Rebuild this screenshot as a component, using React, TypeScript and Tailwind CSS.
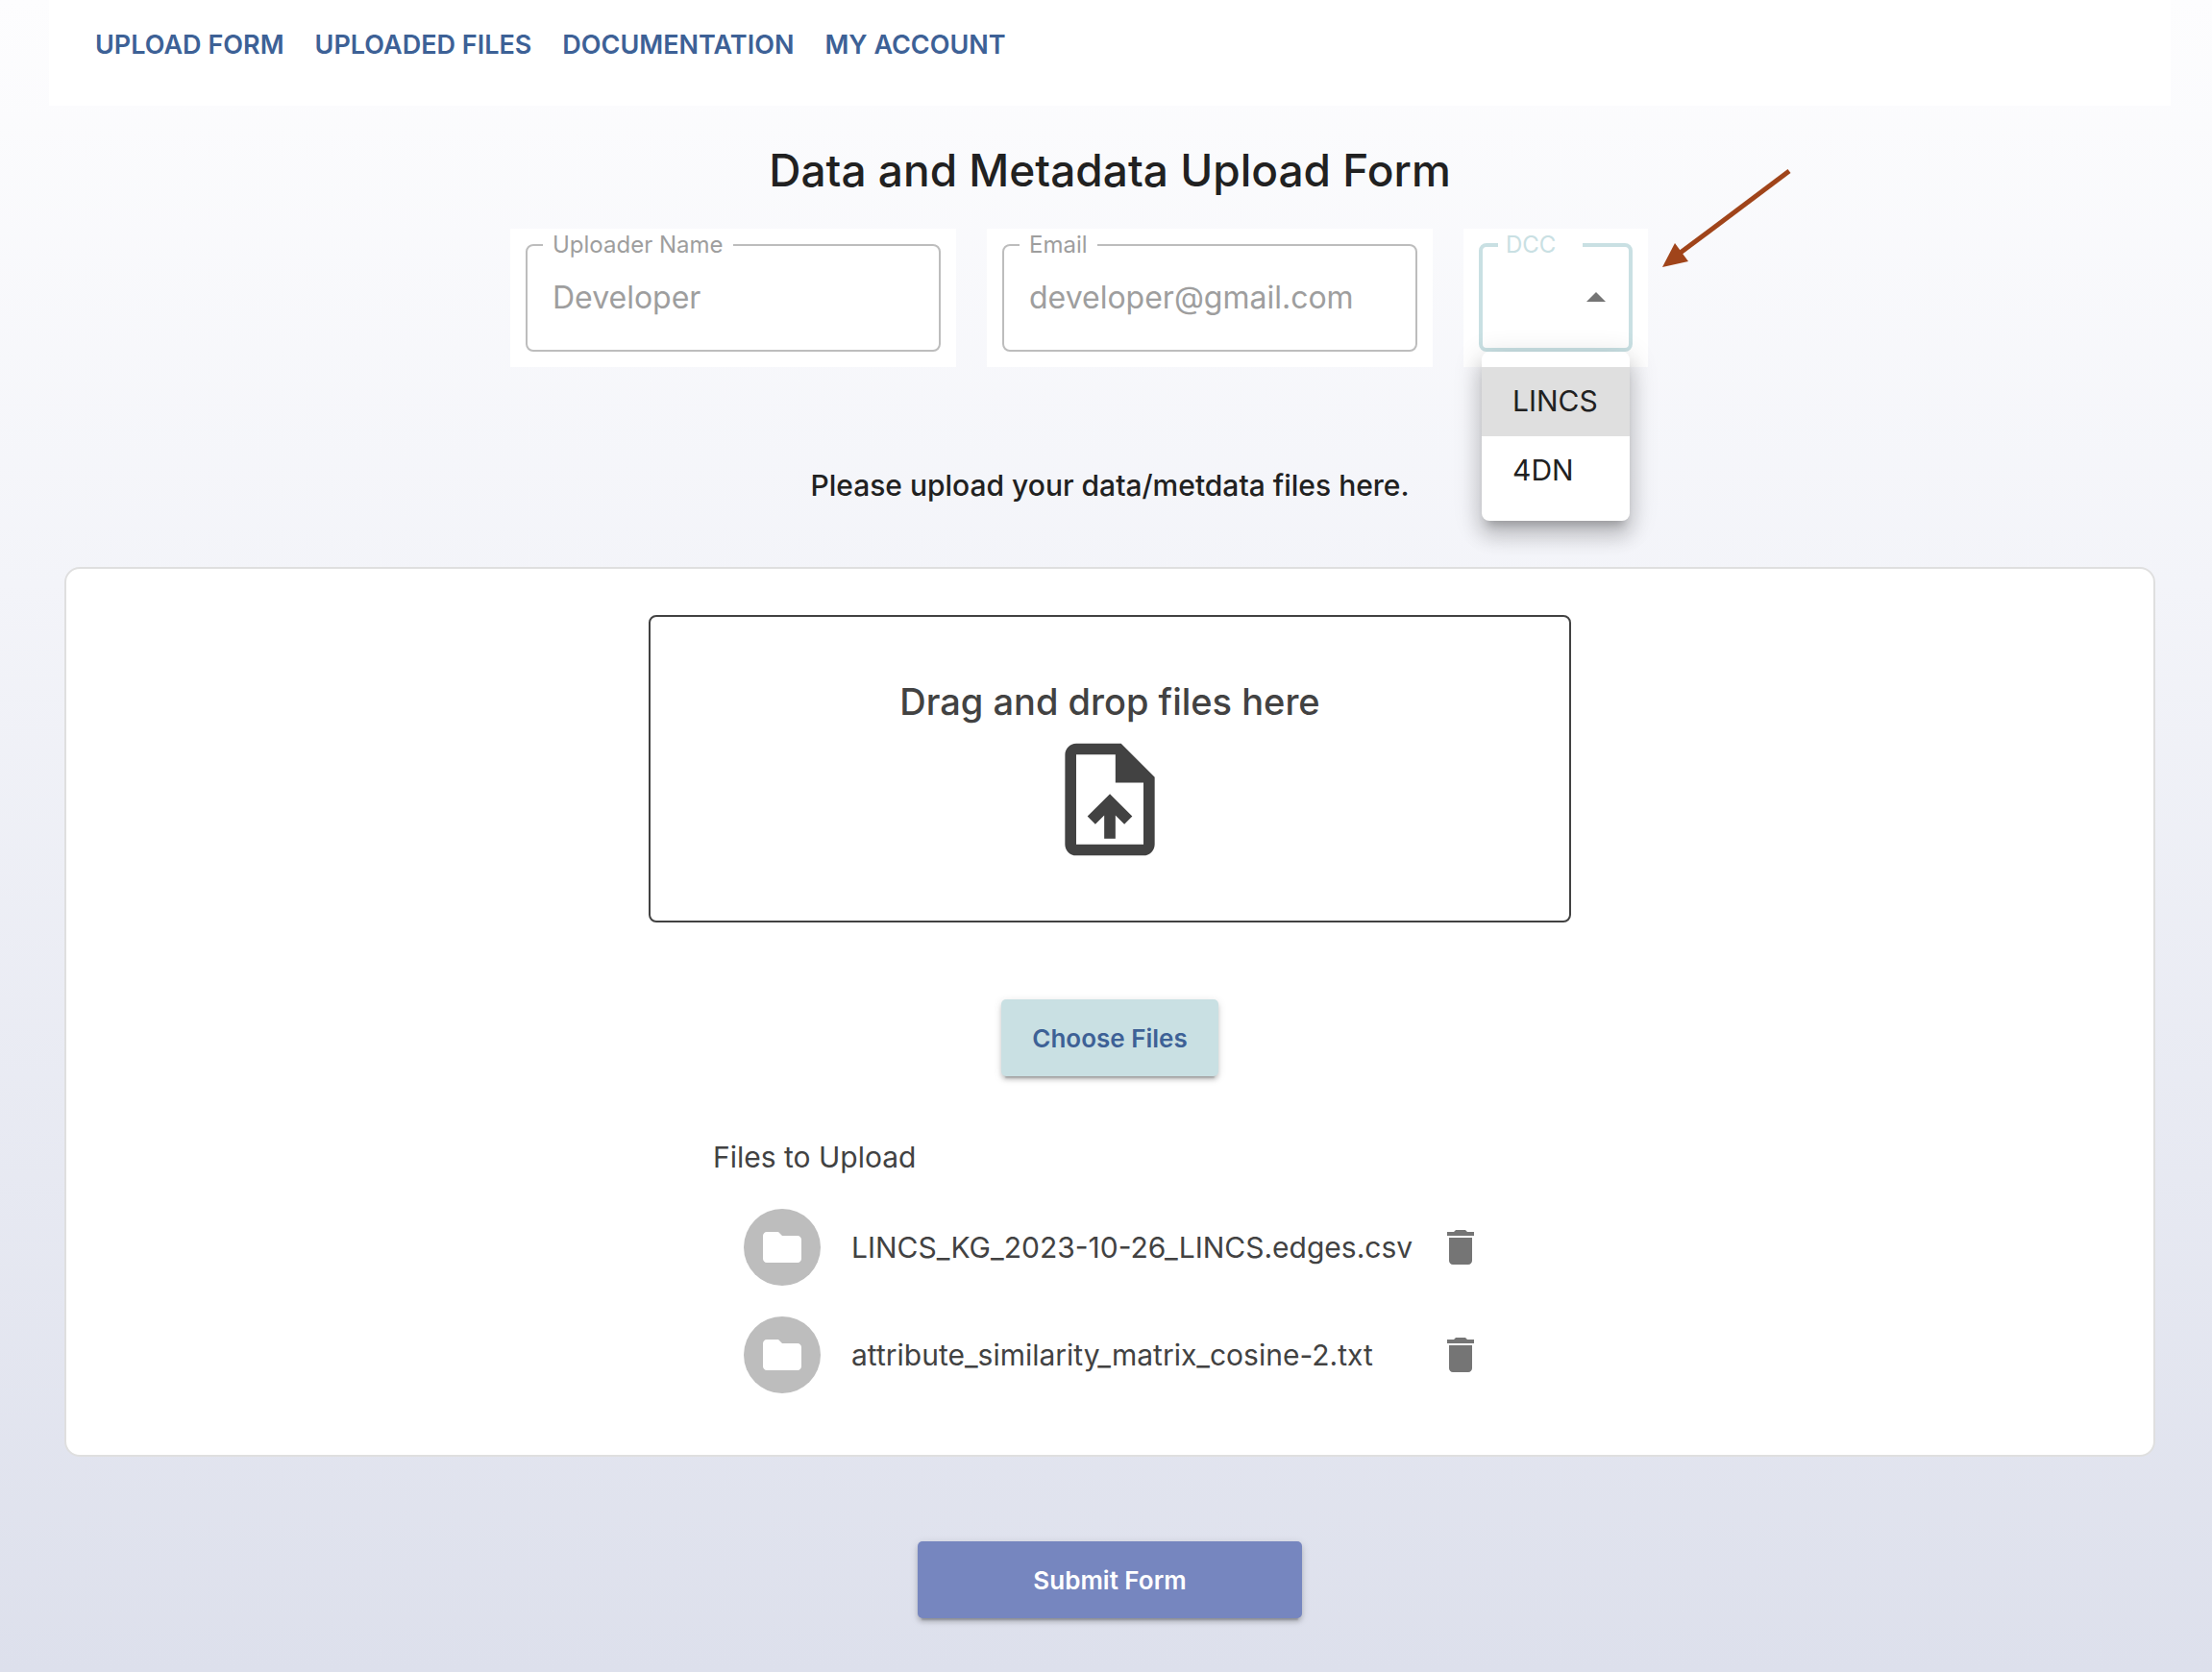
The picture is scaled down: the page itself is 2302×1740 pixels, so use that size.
import { useState } from "react";

const NAV = ["Upload Form", "Uploaded Files", "Documentation", "My Account"];
const FILES = ["LINCS_KG_2023-10-26_LINCS.edges.csv", "attribute_similarity_matrix_cosine-2.txt"];
const DCCS = ["LINCS", "4DN"];

function TextField({ id, label, value, type }: { id: string; label: string; value: string; type: string }) {
  return (
    <div className="w-[464px] bg-white px-4 pt-1 pb-4">
      <fieldset className="rounded-lg border-2 border-[#bdbdbd] px-[18px] pb-3">
        <legend className="ml-[-2px] px-[10px] text-[24px] leading-[25px] text-[#9e9e9e]">
          <label htmlFor={id}>{label}</label>
        </legend>
        <input
          id={id}
          type={type}
          defaultValue={value}
          className="block h-[85px] w-full bg-transparent px-2 text-[32px] text-[#9e9e9e] outline-none"
        />
      </fieldset>
    </div>
  );
}

function DccSelect() {
  const [dcc, setDcc] = useState("");
  return (
    <div className="relative w-48 bg-white px-4 pt-1 pb-4">
      <fieldset className="relative rounded-lg border-4 border-[#c9e0e3] px-4 pb-3">
        <legend className="w-[88px] px-2 text-[24px] leading-[25px] text-[#c9e0e3]">
          <label htmlFor="dcc">DCC</label>
        </legend>
        <select
          id="dcc"
          value={dcc}
          onChange={(e) => setDcc(e.target.value)}
          className="block h-[83px] w-full appearance-none bg-transparent px-2 text-[30px] outline-none"
        >
          <option value=""></option>
          {DCCS.map((d) => (
            <option key={d}>{d}</option>
          ))}
        </select>
        <svg viewBox="0 0 20 10" className="pointer-events-none absolute top-[37px] right-6 h-[10px] w-5 fill-[#757575]">
          <path d="M0 10 10 0l10 10z" />
        </svg>
      </fieldset>
      <ul
        role="listbox"
        aria-label="DCC"
        className="absolute top-32 left-[19px] z-10 w-[154px] rounded-lg bg-white py-4 shadow-[0_10px_10px_-6px_rgba(0,0,0,0.2),0_16px_20px_2px_rgba(0,0,0,0.14),0_6px_28px_4px_rgba(0,0,0,0.12)]"
      >
        {DCCS.map((d) => (
          <li
            key={d}
            role="option"
            aria-selected={d === "LINCS"}
            className="h-[72px] px-8 text-[30px] leading-[70px] aria-selected:bg-[#dfdfdf]"
          >
            {d}
          </li>
        ))}
      </ul>
      <svg viewBox="0 0 140 108" className="absolute top-[-64px] left-[203px] h-[108px] w-[140px]">
        <path d="M136 4 20 91" stroke="#a0441a" strokeWidth="5" fill="none" />
        <path d="M4 104 17 79 31 98z" fill="#a0441a" />
      </svg>
    </div>
  );
}

export default function App() {
  return (
    <div className="min-h-screen bg-linear-to-b from-[#fdfdfe] via-[#f3f4f9] via-35% to-[#dde0ec] pr-[43px] pb-14 pl-[51px] font-['Inter',sans-serif] text-[#212121]">
      <header className="h-[110px] bg-white px-12 pt-[25px]">
        <nav className="flex gap-8 text-[27px] leading-[44px] font-semibold text-[#3d6196] uppercase">
          {NAV.map((n) => (
            <a key={n} href="#">
              {n}
            </a>
          ))}
        </nav>
      </header>
      <main className="flex flex-col items-center">
        <h1 className="mt-[35px] text-[46px] leading-[64px] font-medium">Data and Metadata Upload Form</h1>
        <div className="mt-[29px] flex gap-8 pr-16">
          <TextField id="name" label="Uploader Name" value="Developer" type="text" />
          <TextField id="email" label="Email" value="developer@gmail.com" type="email" />
          <DccSelect />
        </div>
        <p className="mt-[103px] text-[30px] leading-10 font-medium">Please upload your data/metdata files here.</p>
        <section className="mx-4 mt-[65px] flex flex-col items-center self-stretch rounded-2xl border-2 border-[#dfdfdf] bg-white px-4 pt-12 pb-16 text-[#424242]">
          <div className="flex h-80 w-[960px] max-w-full flex-col items-center rounded-lg border-2 border-[#424242] pt-[60px]">
            <p className="text-[38px] leading-[56px] font-medium">Drag and drop files here</p>
            <svg viewBox="0 0 24 24" className="mt-1 h-[140px] w-[140px] fill-[#424242]">
              <path d="M14 2H6c-1.1 0-1.99.9-1.99 2L4 20c0 1.1.89 2 1.99 2H18c1.1 0 2-.9 2-2V8l-6-6zm4 18H6V4h7v5h5v11zM8 15.01l1.41 1.41L11 14.84V19h2v-4.16l1.59 1.59L16 15.01 12.01 11 8 15.01z" />
            </svg>
          </div>
          <button className="mt-20 h-20 rounded-[5px] bg-[#c9e0e3] px-8 text-[26px] font-semibold text-[#3d6196] shadow-[0_6px_2px_-4px_rgba(0,0,0,0.2),0_4px_4px_0_rgba(0,0,0,0.14),0_2px_10px_0_rgba(0,0,0,0.12)]">
            Choose Files
          </button>
          <div className="mt-16 w-[826px] max-w-full">
            <h2 className="text-[30px] leading-10">Files to Upload</h2>
            <ul className="mt-[34px] flex flex-col gap-8 pr-6 pl-8">
              {FILES.map((f) => (
                <li key={f} className="flex items-center">
                  <span className="flex size-20 items-center justify-center rounded-full bg-[#bdbdbd]">
                    <svg viewBox="0 0 24 24" className="size-12 fill-white">
                      <path d="M10 4H4c-1.1 0-1.99.9-1.99 2L2 18c0 1.1.9 2 2 2h16c1.1 0 2-.9 2-2V8c0-1.1-.9-2-2-2h-8l-2-2z" />
                    </svg>
                  </span>
                  <span className="ml-8 min-w-0 flex-1 text-[30px] leading-10 whitespace-nowrap">{f}</span>
                  <button aria-label={`Remove ${f}`}>
                    <svg viewBox="0 0 24 24" className="size-12 fill-[#757575]">
                      <path d="M6 19c0 1.1.9 2 2 2h8c1.1 0 2-.9 2-2V7H6v12zM19 4h-3.500l-1-1h-5l-1 1H5v2h14V4z" />
                    </svg>
                  </button>
                </li>
              ))}
            </ul>
          </div>
        </section>
        <button className="mt-[88px] h-20 w-[400px] rounded-[5px] bg-[#7686bf] text-[26px] font-semibold text-white shadow-[0_6px_2px_-4px_rgba(0,0,0,0.2),0_4px_4px_0_rgba(0,0,0,0.14),0_2px_10px_0_rgba(0,0,0,0.12)]">
          Submit Form
        </button>
      </main>
    </div>
  );
}
